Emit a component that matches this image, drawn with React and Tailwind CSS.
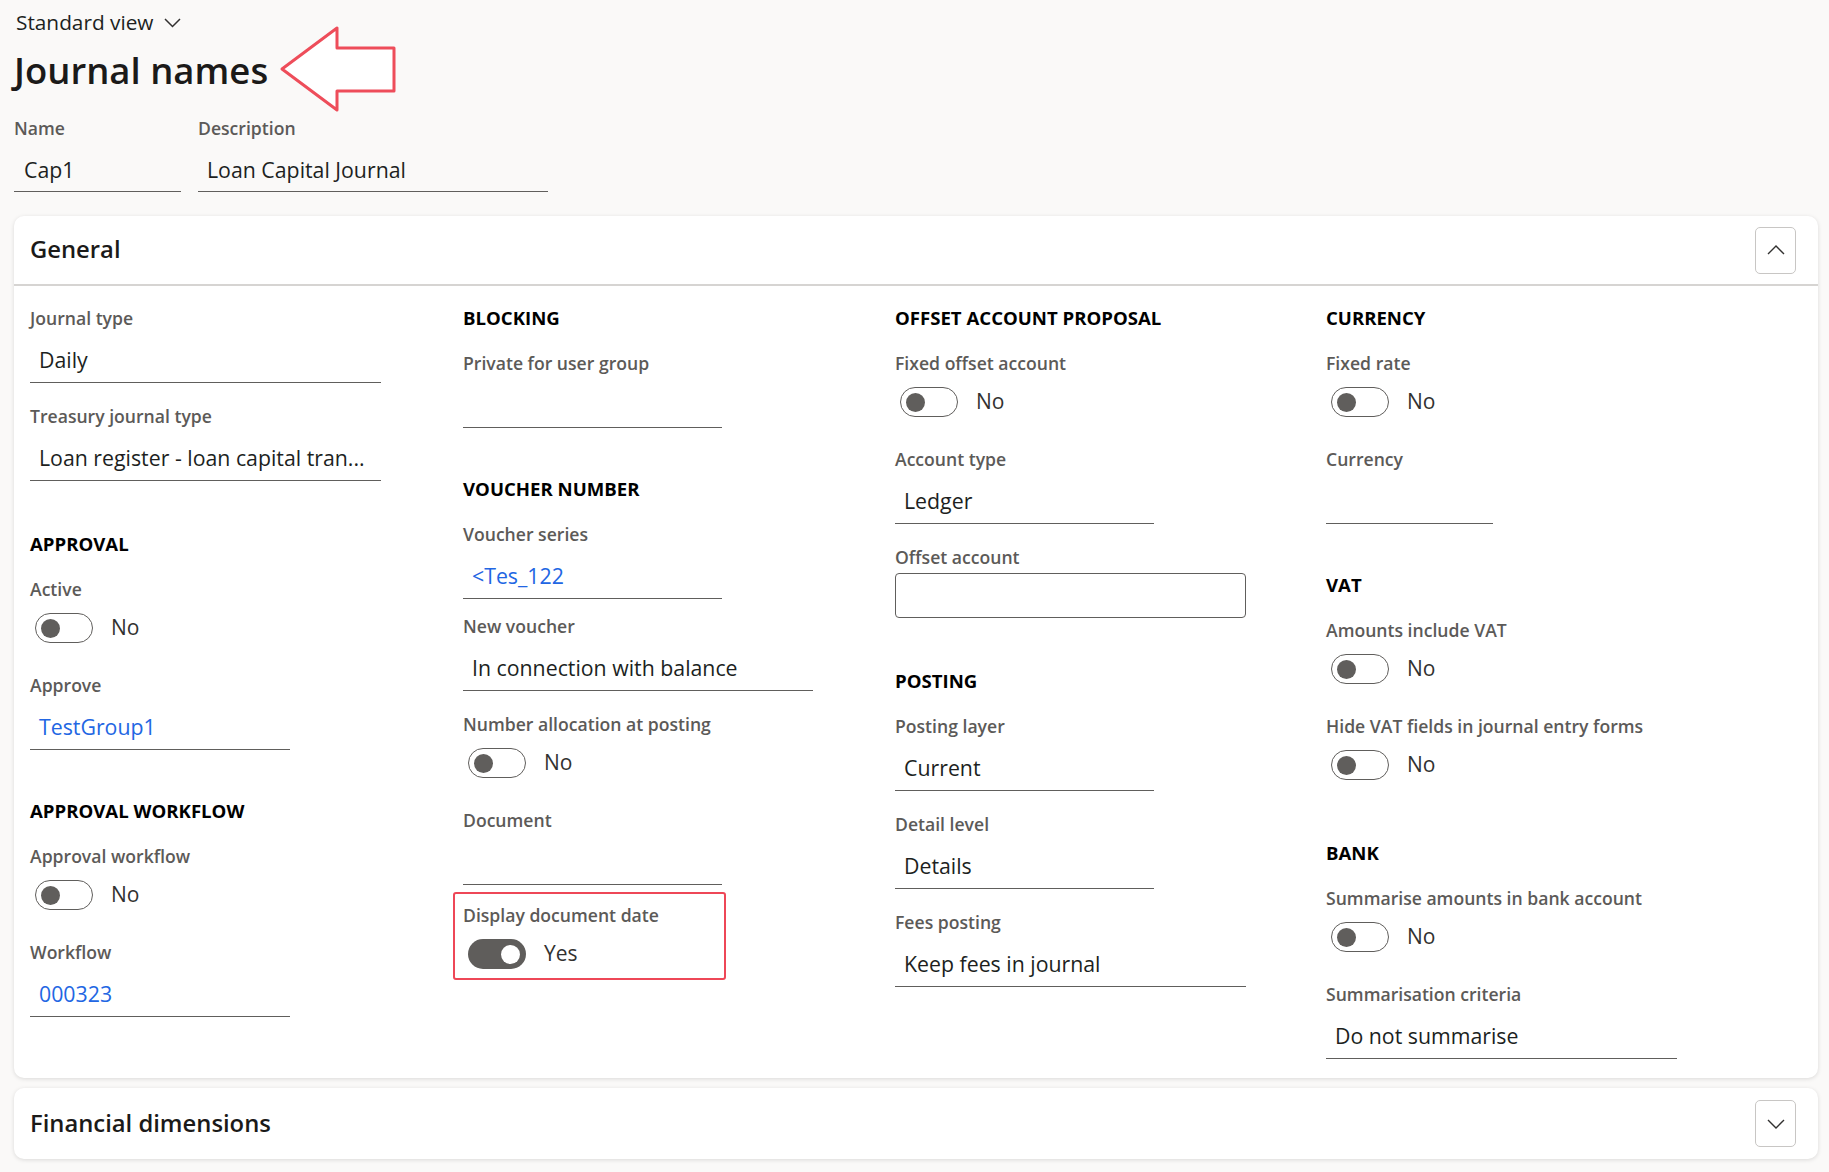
import React from 'react'

const col1 = [
  { t: 'field', label: 'Journal type', value: 'Daily', w: 'w-[351px]' },
  { t: 'field', label: 'Treasury journal type', value: 'Loan register - loan capital tran...', w: 'w-[351px]' },
  { t: 'head', label: 'APPROVAL', mt: 'mt-[51px]' },
  { t: 'toggle', label: 'Active' },
  { t: 'field', label: 'Approve', value: 'TestGroup1', link: true, w: 'w-[260px]' },
  { t: 'head', label: 'APPROVAL WORKFLOW' },
  { t: 'toggle', label: 'Approval workflow' },
  { t: 'field', label: 'Workflow', value: '000323', link: true, w: 'w-[260px]' },
]

const col2 = [
  { t: 'head', label: 'BLOCKING' },
  { t: 'field', label: 'Private for user group', value: '', w: 'w-[259px]' },
  { t: 'head', label: 'VOUCHER NUMBER' },
  { t: 'field', label: 'Voucher series', value: '<Tes_122', link: true, w: 'w-[259px]' },
  { t: 'field', label: 'New voucher', value: 'In connection with balance', w: 'w-[350px]', mt: 'mt-[15px]' },
  { t: 'toggle', label: 'Number allocation at posting' },
  { t: 'field', label: 'Document', value: '', w: 'w-[259px]' },
  { t: 'marked', label: 'Display document date' },
]

const col3 = [
  { t: 'head', label: 'OFFSET ACCOUNT PROPOSAL' },
  { t: 'toggle', label: 'Fixed offset account' },
  { t: 'field', label: 'Account type', value: 'Ledger', w: 'w-[259px]' },
  { t: 'box', label: 'Offset account' },
  { t: 'head', label: 'POSTING' },
  { t: 'field', label: 'Posting layer', value: 'Current', w: 'w-[259px]' },
  { t: 'field', label: 'Detail level', value: 'Details', w: 'w-[259px]' },
  { t: 'field', label: 'Fees posting', value: 'Keep fees in journal', w: 'w-[351px]' },
]

const col4 = [
  { t: 'head', label: 'CURRENCY' },
  { t: 'toggle', label: 'Fixed rate' },
  { t: 'field', label: 'Currency', value: '', w: 'w-[167px]' },
  { t: 'head', label: 'VAT' },
  { t: 'toggle', label: 'Amounts include VAT' },
  { t: 'toggle', label: 'Hide VAT fields in journal entry forms' },
  { t: 'head', label: 'BANK' },
  { t: 'toggle', label: 'Summarise amounts in bank account' },
  { t: 'field', label: 'Summarisation criteria', value: 'Do not summarise', w: 'w-[351px]' },
]

// gap before an item depends on what came before it
function gapClass(prev, cur) {
  if (!prev) return ''
  if (prev.t === 'head') return 'mt-[21px]'
  if (cur.t === 'head') {
    if (prev.t === 'toggle') return 'mt-[61px]'
    if (prev.t === 'box') return 'mt-[51px]'
    return 'mt-[49px]'
  }
  if (cur.t === 'marked') return 'mt-[7px]'
  if (prev.t === 'toggle') return 'mt-[30px]'
  if (prev.t === 'box') return 'mt-[23px]'
  return 'mt-[21px]'
}

function Label({ children }) {
  return <div className="h-[24px] text-[17.6px] leading-[24px] font-semibold text-[#5c5a58] whitespace-nowrap">{children}</div>
}

function Toggle({ on }) {
  return (
    <div className="flex items-center h-[30px] ml-[5px]">
      {on ? (
        <div className="w-[58px] h-[30px] rounded-full bg-[#5f5d5b] flex items-center justify-end pr-[6px]">
          <div className="w-[19px] h-[19px] rounded-full bg-white" />
        </div>
      ) : (
        <div className="w-[58px] h-[30px] rounded-full border-[1.5px] border-[#605e5c] flex items-center pl-[5px]">
          <div className="w-[19px] h-[19px] rounded-full bg-[#605e5c]" />
        </div>
      )}
      <span className="ml-[18px] text-[21px] text-[#323130]">{on ? 'Yes' : 'No'}</span>
    </div>
  )
}

function Item({ it, cls }) {
  if (it.t === 'head') {
    return <div className={`${it.mt || cls} h-[24px] text-[18.6px] leading-[24px] font-bold text-black whitespace-nowrap`}>{it.label}</div>
  }
  if (it.t === 'toggle') {
    return (
      <div className={`${it.mt || cls} flex flex-col gap-[12px]`}>
        <Label>{it.label}</Label>
        <Toggle />
      </div>
    )
  }
  if (it.t === 'marked') {
    return (
      <div className={`${it.mt || cls} -ml-[10px] w-[273px] h-[88px] border-2 border-[#ee4757] rounded-[3px] pl-[8px] pt-[9px] flex flex-col gap-[12px]`}>
        <Label>{it.label}</Label>
        <Toggle on />
      </div>
    )
  }
  if (it.t === 'box') {
    return (
      <div className={`${it.mt || cls} flex flex-col gap-[4px]`}>
        <Label>{it.label}</Label>
        <div className="w-[351px] h-[45px] border-[1.5px] border-[#605e5c] rounded-[4px] bg-white" />
      </div>
    )
  }
  return (
    <div className={`${it.mt || cls} flex flex-col gap-[8px]`}>
      <Label>{it.label}</Label>
      <div className={`${it.w} h-[45px] border-b-[1.5px] border-[#605e5c] flex items-center pl-[9px] text-[21.3px] whitespace-nowrap ${it.link ? 'text-[#2266e3]' : 'text-[#201f1e]'}`}>
        {it.value}
      </div>
    </div>
  )
}

function Column({ items }) {
  return (
    <div className="flex flex-col">
      {items.map((it, i) => (
        <Item key={i} it={it} cls={gapClass(items[i - 1], it)} />
      ))}
    </div>
  )
}

function Chevron({ up }) {
  return (
    <svg width="18" height="10" viewBox="0 0 18 10" fill="none" stroke="#323130" strokeWidth="1.4">
      {up ? <path d="M1 9 L9 1 L17 9" /> : <path d="M1 1 L9 9 L17 1" />}
    </svg>
  )
}

function CollapseButton({ up }) {
  return (
    <button className="w-[41px] h-[47px] rounded-[5px] border-[1.5px] border-[#c8c6c4] bg-white flex items-center justify-center">
      <Chevron up={up} />
    </button>
  )
}

export default function App() {
  return (
    <div className="relative w-[1829px] h-[1172px] overflow-hidden bg-[#faf9f8] font-['Open_Sans',sans-serif] text-[#201f1e]">
      {/* annotation arrow pointing at the title */}
      <svg className="absolute left-[278px] top-[24px]" width="122" height="92" viewBox="0 0 122 92" fill="white" stroke="#ee4d5a" strokeWidth="3" strokeLinejoin="round">
        <path d="M4 45 L59 4 L59 24 L116 24 L116 67 L59 67 L59 86 Z" />
      </svg>

      <div className="pl-[16px] pt-[8px]">
        <div className="h-[30px] flex items-center gap-[11px] text-[20.8px] text-[#201f1e]">
          <span>Standard view</span>
          <svg width="17" height="10" viewBox="0 0 17 10" fill="none" stroke="#323130" strokeWidth="1.5">
            <path d="M1 1 L8.5 8.5 L16 1" />
          </svg>
        </div>
        <h1 className="mt-[8px] h-[48px] -ml-[2px] text-[36.5px] leading-[48px] font-semibold text-[#1b1a19]">Journal names</h1>
      </div>

      <div className="mt-[22px] pl-[14px] flex gap-[17px]">
        <div className="flex flex-col gap-[8px]">
          <Label>Name</Label>
          <div className="w-[167px] h-[44px] border-b-[1.5px] border-[#605e5c] flex items-center pl-[10px] text-[21.3px]">Cap1</div>
        </div>
        <div className="flex flex-col gap-[8px]">
          <Label>Description</Label>
          <div className="w-[350px] h-[44px] border-b-[1.5px] border-[#605e5c] flex items-center pl-[9px] text-[21.3px]">Loan Capital Journal</div>
        </div>
      </div>

      <div className="mt-[24px] ml-[14px] mr-[11px] bg-white rounded-[10px] shadow-[0_1px_4px_rgba(0,0,0,0.13)]">
        <div className="h-[70px] border-b-2 border-[#d6d4d2] flex items-center justify-between pl-[16px] pr-[22px]">
          <span className="text-[23.8px] font-semibold text-[#1b1a19]">General</span>
          <CollapseButton up />
        </div>
        <div className="pl-[16px] pt-[20px] pb-[19px] grid grid-cols-[433px_432px_431px_1fr]">
          <Column items={col1} />
          <Column items={col2} />
          <Column items={col3} />
          <Column items={col4} />
        </div>
      </div>

      <div className="mt-[10px] ml-[14px] mr-[11px] h-[71px] bg-white rounded-[10px] shadow-[0_1px_4px_rgba(0,0,0,0.13)] flex items-center justify-between pl-[16px] pr-[22px]">
        <span className="text-[23.8px] font-semibold text-[#1b1a19]">Financial dimensions</span>
        <CollapseButton />
      </div>
    </div>
  )
}
